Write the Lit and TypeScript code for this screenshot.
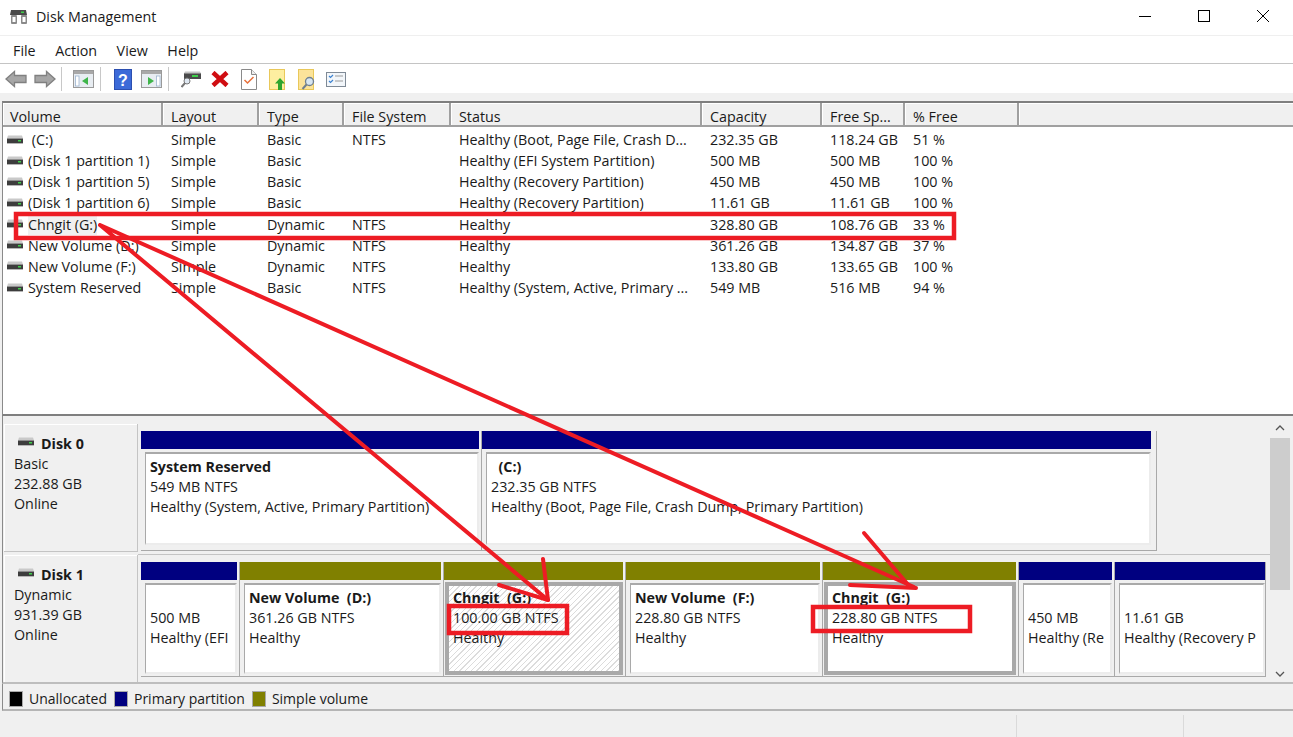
import { LitElement, html, css, svg } from "lit";
import { customElement } from "lit/decorators.js";

const cols = ["Volume", "Layout", "Type", "File System", "Status", "Capacity", "Free Sp...", "% Free"];

const rows = [
  [" (C:)", "Simple", "Basic", "NTFS", "Healthy (Boot, Page File, Crash D...", "232.35 GB", "118.24 GB", "51 %"],
  ["(Disk 1 partition 1)", "Simple", "Basic", "", "Healthy (EFI System Partition)", "500 MB", "500 MB", "100 %"],
  ["(Disk 1 partition 5)", "Simple", "Basic", "", "Healthy (Recovery Partition)", "450 MB", "450 MB", "100 %"],
  ["(Disk 1 partition 6)", "Simple", "Basic", "", "Healthy (Recovery Partition)", "11.61 GB", "11.61 GB", "100 %"],
  ["Chngit (G:)", "Simple", "Dynamic", "NTFS", "Healthy", "328.80 GB", "108.76 GB", "33 %"],
  ["New Volume (D:)", "Simple", "Dynamic", "NTFS", "Healthy", "361.26 GB", "134.87 GB", "37 %"],
  ["New Volume (F:)", "Simple", "Dynamic", "NTFS", "Healthy", "133.80 GB", "133.65 GB", "100 %"],
  ["System Reserved", "Simple", "Basic", "NTFS", "Healthy (System, Active, Primary ...", "549 MB", "516 MB", "94 %"],
];

type Part = { w: number; kind: "navy" | "olive"; name?: string; size: string; status: string; sel?: boolean; hatch?: boolean };

const disks: { name: string; type: string; size: string; parts: Part[] }[] = [
  {
    name: "Disk 0", type: "Basic", size: "232.88 GB",
    parts: [
      { w: 341, kind: "navy", name: "System Reserved", size: "549 MB NTFS", status: "Healthy (System, Active, Primary Partition)" },
      { w: 675, kind: "navy", name: "\u00a0\u00a0(C:)", size: "232.35 GB NTFS", status: "Healthy (Boot, Page File, Crash Dump, Primary Partition)" },
    ],
  },
  {
    name: "Disk 1", type: "Dynamic", size: "931.39 GB",
    parts: [
      { w: 99, kind: "navy", size: "500 MB", status: "Healthy (EFI" },
      { w: 204, kind: "olive", name: "New Volume  (D:)", size: "361.26 GB NTFS", status: "Healthy" },
      { w: 182, kind: "olive", name: "Chngit  (G:)", size: "100.00 GB NTFS", status: "Healthy", sel: true, hatch: true },
      { w: 197, kind: "olive", name: "New Volume  (F:)", size: "228.80 GB NTFS", status: "Healthy" },
      { w: 196, kind: "olive", name: "Chngit  (G:)", size: "228.80 GB NTFS", status: "Healthy", sel: true },
      { w: 96, kind: "navy", size: "450 MB", status: "Healthy (Re" },
      { w: 151, kind: "navy", size: "11.61 GB", status: "Healthy (Recovery P" },
    ],
  },
];

const driveIcon = svg`<svg class="drive" width="18" height="12" viewBox="0 0 18 12">
  <path d="M2 1.500h14l1 3H1z" fill="#c9c9c9"/>
  <rect x="1" y="4.500" width="16" height="4.500" fill="#3d3d3d"/>
  <rect x="12" y="6" width="3" height="1.500" fill="#3fd04a"/>
  <rect x="1" y="9" width="16" height="1" fill="#b5b5b5"/>
</svg>`;

const arrow = (flip: boolean) => svg`<svg width="22" height="18" viewBox="0 0 22 18">
  <g transform="${flip ? "translate(22 0) scale(-1 1)" : ""}">
    <path d="M1 9 9.500 1.500V5.500H21v7H9.500v4z" fill="#a6a6a6" stroke="#808080" stroke-width="1.300"/>
  </g>
</svg>`;

const pane = (left: boolean) => svg`<svg width="21" height="18" viewBox="0 0 21 18">
  <rect x=".5" y=".5" width="20" height="17" fill="#e8edf2" stroke="#9a9a9a"/>
  <rect x="1" y="1" width="19" height="3" fill="#a8a8a8"/>
  <rect x="${left ? 2.5 : 15.5}" y="6" width="3.500" height="10" fill="#fff" stroke="#9db4cf" stroke-width=".8"/>
  <path d="${left ? "M15 7v8l-6-4z" : "M7 7v8l6-4z"}" fill="#3fb54a"/>
</svg>`;

const tools = [
  svg`${arrow(false)}`,
  svg`${arrow(true)}`,
  null,
  svg`${pane(true)}`,
  null,
  svg`<svg width="18" height="21" viewBox="0 0 18 21">
    <rect width="18" height="21" fill="#2c4fb0"/>
    <rect x="1" y="1" width="16" height="19" fill="#3c6ad8"/>
    <text x="9" y="16.500" font-size="16" font-weight="700" text-anchor="middle" fill="#fff" font-family="Liberation Sans">?</text>
  </svg>`,
  svg`${pane(false)}`,
  null,
  svg`<svg width="20" height="20" viewBox="0 0 20 20">
    <path d="M3 4h17v6H3z" fill="#4a4a4a"/><path d="M4 2.500h15l1 2H3z" fill="#c4c4c4"/>
    <rect x="11" y="6" width="6" height="2" fill="#3fd04a"/>
    <circle cx="6" cy="12" r="3" fill="#dfe8f2" stroke="#777"/><path d="M4 14l-3.500 4" stroke="#777" stroke-width="2"/>
  </svg>`,
  svg`<svg width="18" height="16" viewBox="0 0 18 16"><path d="M2 1.500l14 13M16 1.500 2 14.500" stroke="#d00d12" stroke-width="4.500"/></svg>`,
  svg`<svg width="16" height="21" viewBox="0 0 16 21">
    <path d="M.5.5h10l5 5v15H.5z" fill="#fff" stroke="#8a8a8a"/><path d="M10.500.5v5h5" fill="#eee" stroke="#8a8a8a"/>
    <path d="M3.500 11l3 3 6-6" fill="none" stroke="#e8703a" stroke-width="1.500"/>
  </svg>`,
  svg`<svg width="17" height="21" viewBox="0 0 17 21">
    <rect x=".5" y=".5" width="15" height="20" fill="#fdeea0" stroke="#e9c85a"/>
    <path d="M11 9l5 5.500h-3V21H9v-6.500H6z" fill="#2fa52f"/>
  </svg>`,
  svg`<svg width="18" height="21" viewBox="0 0 18 21">
    <rect x=".5" y=".5" width="15" height="20" fill="#fbe39a" stroke="#e9c85a"/>
    <circle cx="11.500" cy="12.500" r="4" fill="#d7e6f2" stroke="#6f7f8f" stroke-width="1.300"/><path d="M8.500 15.500l-4 4.500" stroke="#6f7f8f" stroke-width="2"/>
  </svg>`,
  svg`<svg width="20" height="15" viewBox="0 0 20 15">
    <rect x=".5" y=".5" width="19" height="14" fill="#f2f6fa" stroke="#7f8a96"/>
    <path d="M3 4l1.500 1.500L7 3M3 9l1.500 1.500L7 8" fill="none" stroke="#3d82d0" stroke-width="1.200"/>
    <path d="M9 4h8M9 9h8" stroke="#9a9a9a"/>
  </svg>`,
];

@customElement("app-root")
export class AppRoot extends LitElement {
  static styles = css`
    :host {
      display: block;
      width: 1293px;
      height: 737px;
      overflow: hidden;
      position: relative;
      background: #f0f0f0;
      color: #1a1a1a;
      font-family: "Open Sans", "Noto Sans", sans-serif;
      font-size: 14.3px;
      line-height: 20px;
    }
    .title {
      height: 36px;
      background: #fff;
      display: flex;
      align-items: center;
      padding: 0 1px 2px 10px;
      border-bottom: 1px solid #efefef;
      box-sizing: border-box;
    }
    .title .app { flex: 1; display: flex; align-items: center; gap: 8px; }
    .winbtn { width: 59px; display: flex; justify-content: center; margin-bottom: 1px; }
    .menu {
      height: 28px;
      box-sizing: border-box;
      background: #fff;
      border-bottom: 1px solid #c4c4c4;
      display: flex;
      align-items: center;
      gap: 19.5px;
      padding: 2px 0 0 13px;
    }
    .toolbar {
      height: 29px;
      box-sizing: border-box;
      background: #fff;
      display: flex;
      align-items: center;
      padding: 1px 0 0 1px;
    }
    .tool { width: 29px; display: flex; justify-content: center; align-items: center; }
    .sep { width: 1px; height: 24px; background: #c8c8c8; margin: 0 7px 0 2px; }
    .upper {
      margin: 8px 0 0 2px;
      height: 315px;
      box-sizing: border-box;
      border-top: 2px solid #7f7f7f;
      border-left: 1px solid #8a8a8a;
      border-bottom: 2px solid #7f7f7f;
      background: #fff;
    }
    .grid { display: grid; grid-template-columns: 160px 96px 85px 107px 251px 120px 83px 114px 1fr; }
    .head { height: 22px; background: #f0f0f0; border-bottom: 2px solid #a0a0a0; margin-bottom: 2px; }
    .head div {
      height: 22px;
      padding-left: 8px;
      border-right: 2px solid #a0a0a0;
      box-shadow: inset 1px 1px 0 #fff;
      white-space: pre;
      line-height: 27px;
    }
    .head div:first-child { padding-left: 7px; }
    .head div:last-child { border-right: 0; }
    .row { height: 21.15px; line-height: 21.15px; }
    .row > div { padding-left: 8px; white-space: pre; overflow: hidden; }
    .row > .vol { padding-left: 3px; display: flex; align-items: center; gap: 4px; }
    .hl { background: #f0f0f0; }
    .lower {
      height: 268px;
      box-sizing: border-box;
      margin-left: 2px;
      padding: 8px 0 0 1px;
      border-left: 1px solid #8a8a8a;
      border-bottom: 2px solid #bdbdbd;
      display: flex;
    }
    .disks { flex: 1; display: flex; flex-direction: column; }
    .disk { display: flex; height: 131px; }
    .disk + .disk { height: 127px; }
    .label {
      width: 134px;
      flex: none;
      box-sizing: border-box;
      padding: 10px 0 0 10px;
      margin-bottom: 3px;
      border-right: 1px solid #c4c4c4;
      border-bottom: 1px solid #c4c4c4;
      box-shadow: inset 1px 1px 0 #fff;
    }
    .disk + .disk .label { margin-bottom: 0; border-bottom: 0; }
    .label .nm { display: flex; align-items: center; gap: 6px; font-weight: 700; padding-left: 3px; }
    .label .nm svg { margin-bottom: 5px; }
    .parts { display: flex; padding: 7px 0 3px 3px; border-bottom: 1px solid #c4c4c4; flex: 1; }
    .disk + .disk .parts { padding-bottom: 5px; border-bottom: 0; }
    .part {
      box-sizing: border-box;
      border-right: 1px solid #a9a9a9;
      border-bottom: 1px solid #a9a9a9;
      padding-right: 2px;
      display: flex;
      flex-direction: column;
    }
    .part:last-child { padding-right: 0; }
    .disk:first-child .part:last-child { padding-right: 5px; }
    .bar { height: 18px; flex: none; }
    .navy { background: #000080; }
    .olive { background: #808000; }
    .box {
      flex: 1;
      min-height: 0;
      margin: 3px 0 2px 4px;
      box-sizing: border-box;
      background: #fff;
      border-top: 2px solid #a9a9a9;
      border-left: 1px solid #a9a9a9;
      border-right: 2px solid #ececec;
      border-bottom: 2px solid #ececec;
      padding: 3px 0 0 4px;
      overflow: hidden;
    }
    .disk:first-child .box { margin-bottom: 5px; }
    .box > * { white-space: pre; }
    .box.sel { border: 4px solid #a9a9a9; margin: 2px 0 1px 1px; padding: 2px 0 0 4px; }
    .box.hatch { background: repeating-linear-gradient(135deg, #fff 0 3px, #dcdcdc 3px 4px); }
    .box b { display: block; height: 20px; }
    .scroll {
      width: 20px;
      margin: -4px 3px 0 0;
      position: relative;
      display: flex;
      flex-direction: column;
      align-items: center;
      justify-content: space-between;
      padding: 5px 0;
      box-sizing: border-box;
    }
    .thumb {
      position: absolute;
      top: 18px;
      left: 0;
      width: 20px;
      height: 152px;
      background: #cdcdcd;
    }
    .legend {
      height: 27px;
      box-sizing: border-box;
      margin-left: 2px;
      border-left: 1px solid #8a8a8a;
      border-bottom: 2px solid #b5b5b5;
      display: flex;
      align-items: center;
      padding: 4px 0 0 6px;
      font-size: 14px;
    }
    .swatch { width: 14px; height: 16px; border: 1px solid #a9a9a9; box-sizing: border-box; margin-right: 6px; }
    .legend span { margin-right: 7px; }
    .status {
      display: flex;
      justify-content: flex-end;
      height: 26px;
      padding-top: 4px;
      box-sizing: border-box;
    }
    .status div { border-left: 1px solid #dadada; }
    .marks { position: absolute; inset: 0; pointer-events: none; }
  `;

  render() {
    return html`
      <div class="title">
        <div class="app">
          <svg width="18" height="18" viewBox="0 0 18 18">
            <path d="M1 2h15l1 5H0z" fill="#4a4a4a"/>
            <rect x="11" y="3.500" width="3" height="1.500" fill="#3fd04a"/>
            <rect x="1" y="7" width="6" height="9" rx="1" fill="#8a8a8a"/>
            <rect x="11" y="7" width="6" height="9" rx="1" fill="#8a8a8a"/>
            <rect x="2.500" y="9" width="3" height="5" fill="#fff"/>
            <rect x="12.500" y="9" width="3" height="5" fill="#fff"/>
          </svg>
          <span>Disk Management</span>
        </div>
        <div class="winbtn"><svg width="12" height="12" viewBox="0 0 12 12"><path d="M0 6.500h12" stroke="#000"/></svg></div>
        <div class="winbtn"><svg width="12" height="12" viewBox="0 0 12 12"><rect x=".5" y=".5" width="11" height="11" fill="none" stroke="#000"/></svg></div>
        <div class="winbtn"><svg width="12" height="12" viewBox="0 0 12 12"><path d="M0 0l12 12M12 0 0 12" stroke="#000"/></svg></div>
      </div>
      <div class="menu"><span>File</span><span>Action</span><span>View</span><span>Help</span></div>
      <div class="toolbar">
        ${tools.map((t) => (t ? html`<div class="tool">${t}</div>` : html`<div class="sep"></div>`))}
      </div>
      <div class="upper">
        <div class="grid head">${cols.map((c) => html`<div>${c}</div>`)}<div></div></div>
        ${rows.map((r, i) => html`
          <div class="grid row">
            <div class="vol">${driveIcon}<span class=${i === 4 ? "hl" : ""}>${r[0]}</span></div>
            ${r.slice(1).map((v) => html`<div>${v}</div>`)}
            <div></div>
          </div>`)}
      </div>
      <div class="lower">
        <div class="disks">
          ${disks.map((d) => html`
            <div class="disk">
              <div class="label">
                <div class="nm">${driveIcon}<span>${d.name}</span></div>
                <div>${d.type}</div>
                <div>${d.size}</div>
                <div>Online</div>
              </div>
              <div class="parts">
                ${d.parts.map((p) => html`
                  <div class="part" style="width:${p.w}px">
                    <div class="bar ${p.kind}"></div>
                    <div class="box ${p.sel ? "sel" : ""} ${p.hatch ? "hatch" : ""}">
                      <b>${p.name ?? ""}</b>
                      <div>${p.size}</div>
                      <div>${p.status}</div>
                    </div>
                  </div>`)}
              </div>
            </div>`)}
        </div>
        <div class="scroll">
          <div class="thumb"></div>
          <svg width="10" height="6" viewBox="0 0 10 6"><path d="M1 5l4-4 4 4" fill="none" stroke="#555" stroke-width="1.300"/></svg>
          <svg width="10" height="6" viewBox="0 0 10 6"><path d="M1 1l4 4 4-4" fill="none" stroke="#555" stroke-width="1.300"/></svg>
        </div>
      </div>
      <div class="legend">
        <div class="swatch" style="background:#000"></div><span>Unallocated</span>
        <div class="swatch" style="background:#000080"></div><span>Primary partition</span>
        <div class="swatch" style="background:#808000"></div><span>Simple volume</span>
      </div>
      <div class="status">
        <div style="width:166px"></div>
        <div style="width:109px"></div>
      </div>
      <svg class="marks" width="1293" height="737" viewBox="0 0 1293 737" fill="none" stroke="#ed1c24">
        <rect x="16" y="214" width="938" height="24" stroke-width="4.500"/>
        <rect x="449" y="606" width="118" height="27" stroke-width="4.500"/>
        <rect x="813" y="607" width="157" height="24" stroke-width="4.500"/>
        <g stroke-width="4" stroke-linecap="round">
          <path d="M100 225 548 600M100 225 914 587"/>
          <path d="M543 559 548 600M499 585 548 600"/>
          <path d="M864 533 910 587M850 585 916 588"/>
        </g>
      </svg>
    `;
  }
}
